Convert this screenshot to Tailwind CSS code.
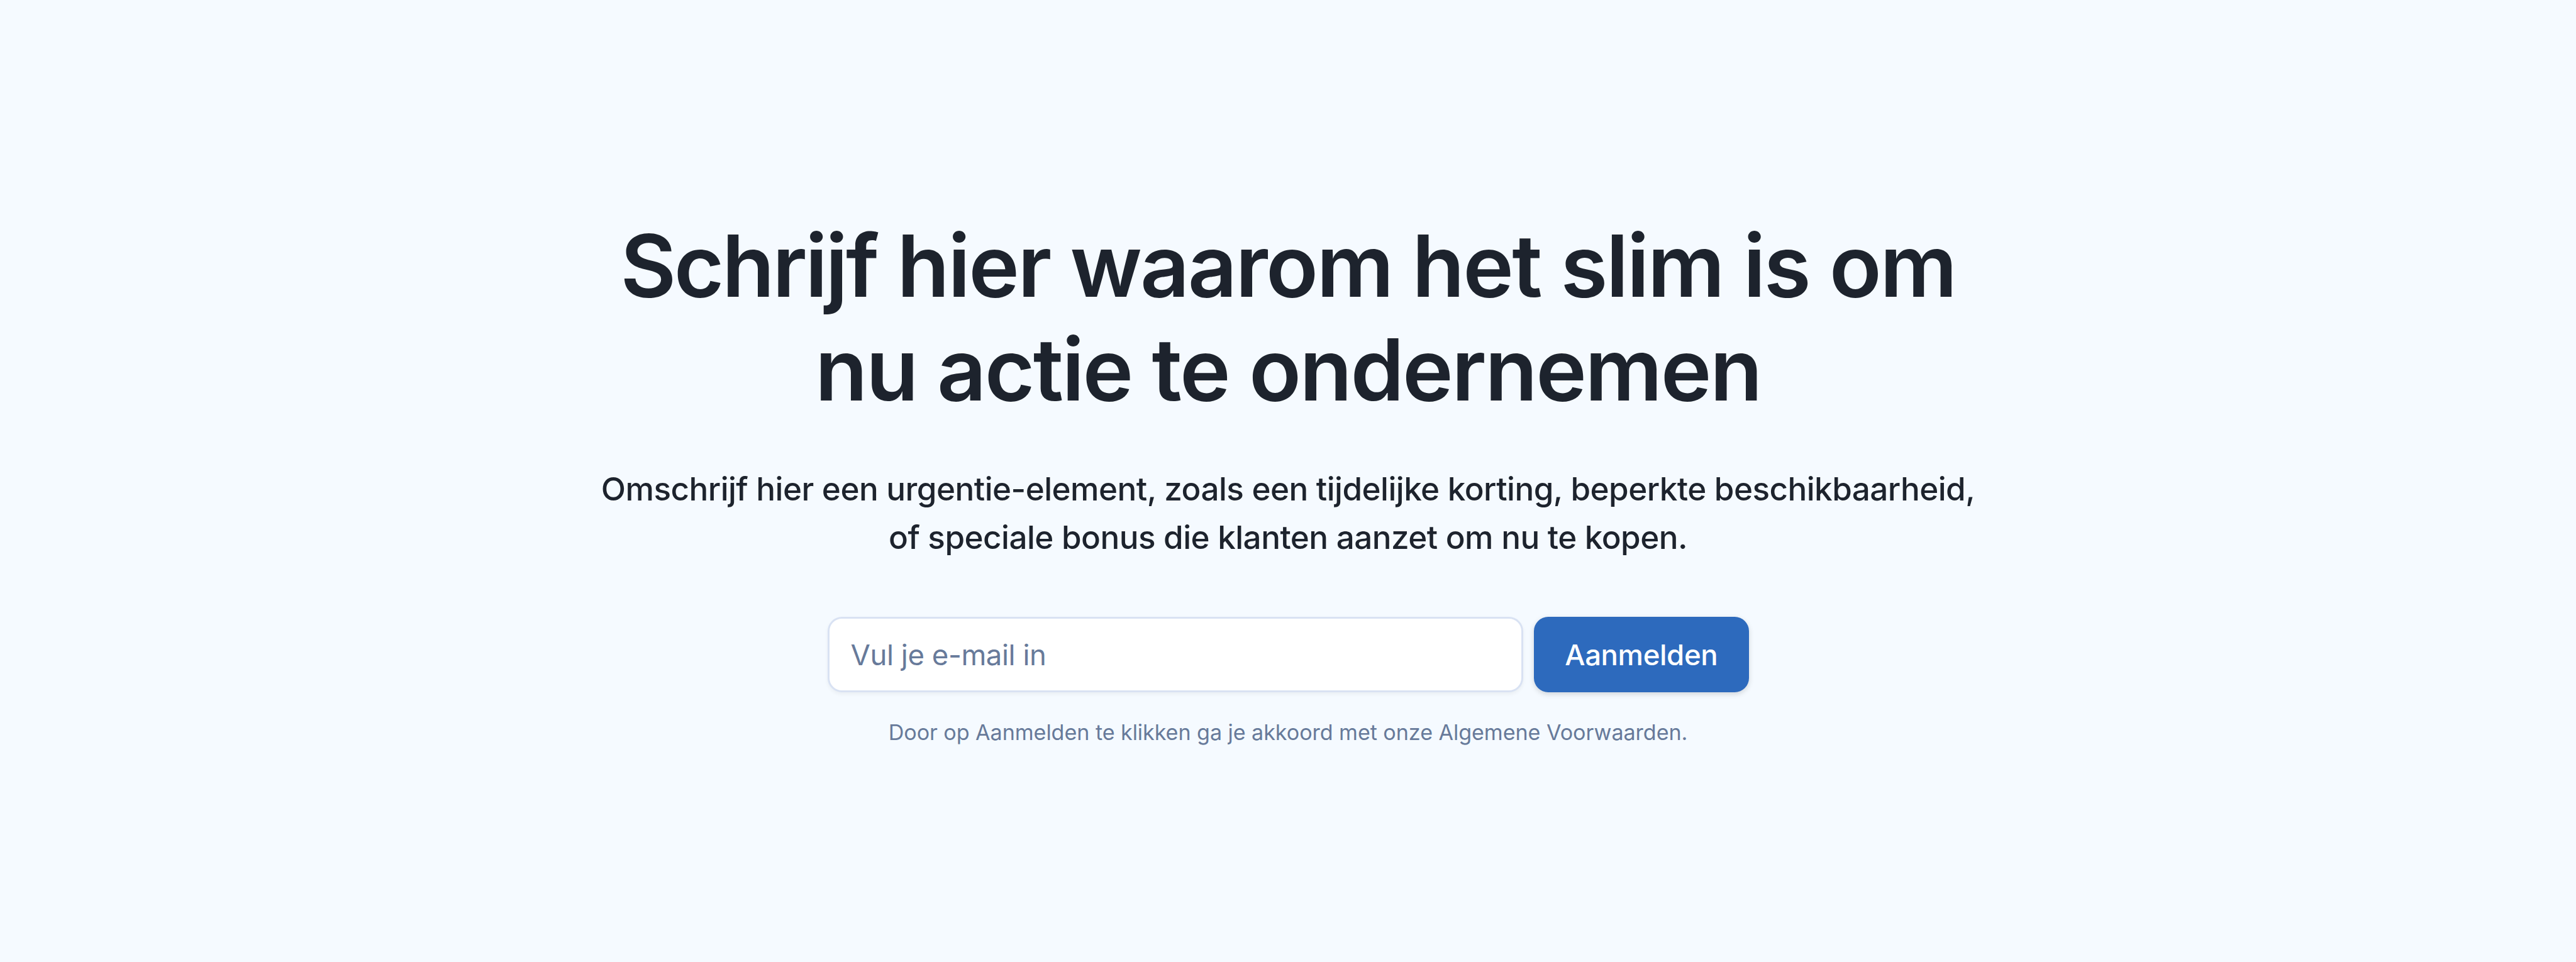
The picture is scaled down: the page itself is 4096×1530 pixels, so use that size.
<!DOCTYPE html>
<html lang="nl">
<head>
    <meta charset="UTF-8">
    <meta name="viewport" content="width=device-width, initial-scale=1.0">
    <title>Aanmelden</title>
    <script src="https://cdn.jsdelivr.net/npm/@tailwindcss/browser@4"></script>
</head>
<body class="bg-[#f5faff] font-['Inter',sans-serif] text-[#1d232d]">
    <section class="flex flex-col items-center h-[1530px] pt-[340px] text-center">
        <h1 class="text-[136.53px] leading-[165px] font-semibold tracking-[-0.0197em]">
            <span class="tracking-[-0.025em]">Schrijf</span> hier waarom het slim is om<br><span class="tracking-[-0.0187em]">nu actie te ondernemen</span>
        </h1>
        <p class="mt-[69px] text-[51.2px] leading-[76.8px] font-medium tracking-[-0.0105em]">
            Omschrijf hier een urgentie-element, zoals een tijdelijke korting, beperkte beschikbaarheid,<br>of speciale bonus die klanten aanzet om nu te kopen.
        </p>
        <form class="mt-[88.7px] flex gap-[17px]">
            <input type="email" placeholder="Vul je e-mail in" class="w-[1106.5px] h-[119.5px] px-[34px] rounded-[22.75px] border-3 border-[#d9e2f3] bg-white text-[45.5px] tracking-[-0.0098em] placeholder:text-[#677a9a] shadow-[0_3px_6px_rgba(0,0,0,0.05)]">
            <button type="button" class="w-[341.5px] h-[119.5px] pt-0.5 rounded-[22.75px] bg-[#2d6abd] text-[45.5px] font-medium tracking-[-0.008em] text-white shadow-[0_3px_8px_rgba(0,0,0,0.15)]">Aanmelden</button>
        </form>
        <p class="mt-[38.6px] text-[34.13px] leading-[51px] tracking-[-0.002em] text-[#677a9a]">Door op Aanmelden te klikken ga je akkoord met onze Algemene Voorwaarden.</p>
    </section>
</body>
</html>
